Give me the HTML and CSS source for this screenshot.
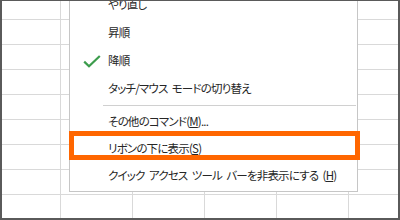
FILE: index.html
```html
<!DOCTYPE html>
<html lang="ja">
<head>
<meta charset="utf-8">
<link rel="stylesheet" href="styles.css">
</head>
<body>
<div class="sheet">
  <div class="menu">
    <div class="group">
      <div class="item"><span class="check"></span><span class="label">やり直し</span></div>
      <div class="item"><span class="check"></span><span class="label">昇順</span></div>
      <div class="item"><span class="check"><svg width="18" height="13" viewBox="0 0 18 13"><path d="M1.2 6.6 L6 11.2 L16.8 1" fill="none" stroke="#3c9c4c" stroke-width="2.2"/></svg></span><span class="label">降順</span></div>
      <div class="item"><span class="check"></span><span class="label">タッチ/マウス モードの切り替え</span></div>
    </div>
    <div class="sep"></div>
    <div class="group">
      <div class="item short"><span class="check"></span><span class="label">その他のコマンド(<u>M</u>)...</span></div>
      <div class="item short"><span class="check"></span><span class="label">リボンの下に表示(<u>S</u>)</span></div>
      <div class="item"><span class="check"></span><span class="label">クイック アクセス ツール バーを非表示にする (<u>H</u>)</span></div>
    </div>
  </div>
  <div class="highlight"></div>
</div>
</body>
</html>
```
FILE: styles.css
```css
html, body {
  margin: 0;
  padding: 0;
  background: #fff;
}
.sheet {
  position: relative;
  box-sizing: border-box;
  width: 400px;
  height: 220px;
  overflow: hidden;
  border-style: solid;
  border-color: #5a5a5a;
  border-width: 1px 2px 2px 2px;
  background-color: #fff;
  background-image:
    linear-gradient(to right, #d9d9d9 1px, transparent 1px),
    linear-gradient(to bottom, #d9d9d9 1px, transparent 1px);
  background-size: 72px 100%, 100% 25px;
  background-position: 58px 0, 0 18px;
  font-family: "Noto Sans CJK JP", "Noto Sans", sans-serif;
  font-size: 11.5px;
  color: #262626;
}
.menu {
  position: absolute;
  left: 67px;
  top: -11px;
  width: 287px;
  background: #fff;
  border: 1px solid #c6c6c6;
  padding-bottom: 1px;
  display: flex;
  flex-direction: column;
}
.item {
  height: 28px;
  display: flex;
  align-items: center;
}
.item.short {
  height: 27px;
}
.check {
  width: 38px;
  box-sizing: border-box;
  padding-left: 13px;
  display: flex;
  justify-content: flex-start;
}
.label {
  font-feature-settings: "palt";
  letter-spacing: -0.8px;
  word-spacing: 2.5px;
  line-height: 1;
  white-space: nowrap;
}
.label u {
  text-underline-offset: 1px;
}
.sep {
  height: 5px;
  display: flex;
  align-items: center;
  padding-left: 33px;
  padding-right: 1px;
}
.sep::after {
  content: "";
  flex: 1;
  height: 1px;
  background: #d0d0d0;
}
.highlight {
  position: absolute;
  left: 67px;
  top: 130px;
  width: 291px;
  height: 29px;
  box-sizing: border-box;
  border: 5px solid #ff6600;
}
```
